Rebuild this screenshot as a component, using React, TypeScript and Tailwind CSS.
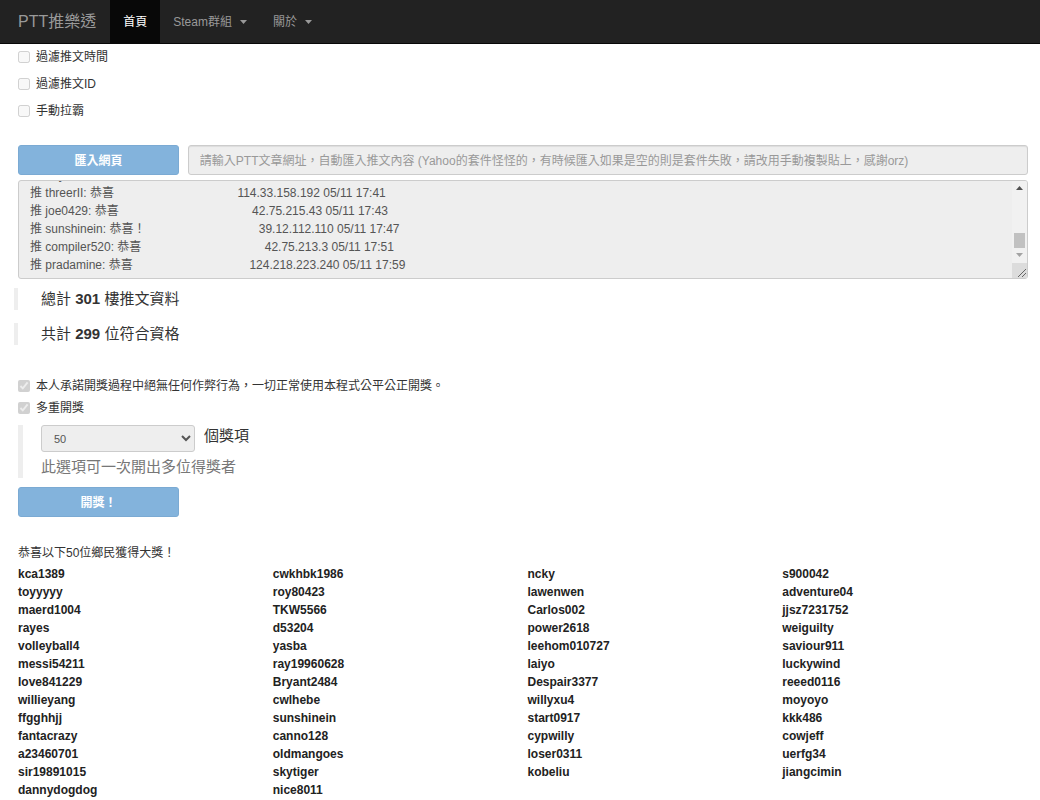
import { useLayoutEffect, useRef } from "react";
import clsx from "clsx";

const pushes = [
  { id: "any", text: "恭喜", pad: 38, meta: "42.73.18.120 05/11 17:40" },
  { id: "threerII", text: "恭喜", pad: 37, meta: "114.33.158.192 05/11 17:41" },
  { id: "joe0429", text: "恭喜", pad: 40, meta: "42.75.215.43 05/11 17:43" },
  { id: "sunshinein", text: "恭喜！", pad: 34, meta: "39.12.112.110 05/11 17:47" },
  { id: "compiler520", text: "恭喜", pad: 37, meta: "42.75.213.3 05/11 17:51" },
  { id: "pradamine", text: "恭喜", pad: 35, meta: "124.218.223.240 05/11 17:59" },
];

const pushLog = pushes
  .map((p) => `推 ${p.id}: ${p.text}${" ".repeat(p.pad)}${p.meta}`)
  .join("\n");

const winners = [
  ["kca1389", "toyyyyy", "maerd1004", "rayes", "volleyball4", "messi54211", "love841229", "willieyang", "ffgghhjj", "fantacrazy", "a23460701", "sir19891015", "dannydogdog"],
  ["cwkhbk1986", "roy80423", "TKW5566", "d53204", "yasba", "ray19960628", "Bryant2484", "cwlhebe", "sunshinein", "canno128", "oldmangoes", "skytiger", "nice8011"],
  ["ncky", "lawenwen", "Carlos002", "power2618", "leehom010727", "laiyo", "Despair3377", "willyxu4", "start0917", "cypwilly", "loser0311", "kobeliu"],
  ["s900042", "adventure04", "jjsz7231752", "weiguilty", "saviour911", "luckywind", "reeed0116", "moyoyo", "kkk486", "cowjeff", "uerfg34", "jiangcimin"],
];

const navItems = [
  { label: "首頁", active: true, menu: false },
  { label: "Steam群組", active: false, menu: true },
  { label: "關於", active: false, menu: true },
];

function Navbar() {
  return (
    <nav className="flex h-11 items-stretch border-b border-[#080808] bg-[#222] text-[#999]">
      <a href="#" className="flex items-center pl-[18px] pr-3.5 text-base">
        PTT推樂透
      </a>
      {navItems.map(({ label, active, menu }) => (
        <a
          key={label}
          href="#"
          className={clsx("flex items-center gap-2 px-[13px]", active && "bg-[#080808] text-white")}
        >
          {label}
          {menu && (
            <svg width="7" height="4" viewBox="0 0 7 4" fill="currentColor" aria-hidden="true">
              <path d="M0 0h7L3.5 4z" />
            </svg>
          )}
        </a>
      ))}
    </nav>
  );
}

function Check({ label, checked = false }: { label: string; checked?: boolean }) {
  return (
    <label className="flex items-center gap-1.5">
      <input type="checkbox" className="size-3" defaultChecked={checked} disabled />
      {label}
    </label>
  );
}

function PrimaryButton({ children }: { children: string }) {
  return (
    <button
      type="button"
      disabled
      className="h-[30px] rounded-[3px] border border-[#357ebd] bg-[#428bca] pt-px font-bold text-white opacity-65"
    >
      {children}
    </button>
  );
}

function PushLog() {
  const ref = useRef<HTMLTextAreaElement>(null);

  // keep the newest pushes in view
  useLayoutEffect(() => {
    if (ref.current) ref.current.scrollTop = ref.current.scrollHeight;
  }, []);

  return (
    <div className="flex h-[99px] overflow-hidden rounded-[3px] border border-[#ccc] bg-[#eee]">
      <textarea
        ref={ref}
        aria-label="推文內容"
        defaultValue={pushLog}
        disabled
        className="flex-1 resize-none overflow-hidden py-1 pl-[11px] leading-[18px] text-[#555]"
      />
      <div className="flex w-[15px] flex-col bg-[#f1f1f1]" aria-hidden="true">
        <svg className="w-full flex-1" viewBox="0 0 15 82">
          <path d="M4 9h7L7.5 5z" fill="#505050" />
          <path d="M2 52h11v15H2z" fill="#c1c1c1" />
          <path d="M4 72h7l-3.5 4z" fill="#a3a3a3" />
        </svg>
        <svg width="15" height="15" viewBox="0 0 15 15" className="bg-[#dcdcdc]">
          <path d="M6 14l8-8M10 14l4-4" stroke="#666" fill="none" />
        </svg>
      </div>
    </div>
  );
}

function Stat({ before, count, after }: { before: string; count: number; after: string }) {
  return (
    <blockquote className="-ml-1 border-l-4 border-[#eee] pl-[23px] text-[15px] leading-[22px]">
      {before} <strong>{count}</strong> {after}
    </blockquote>
  );
}

export default function App() {
  return (
    <div className="min-h-screen bg-white font-['Liberation_Sans','Noto_Sans_CJK_TC',sans-serif] text-xs leading-[18px] text-[#333]">
      <Navbar />
      <main className="flex flex-col pl-[18px] pr-3 pt-1">
        <div className="flex flex-col items-start gap-[9px]">
          <Check label="過濾推文時間" />
          <Check label="過濾推文ID" />
          <Check label="手動拉霸" />
        </div>

        <div className="mt-[25px] grid grid-cols-6 gap-x-[9px]">
          <PrimaryButton>匯入網頁</PrimaryButton>
          <input
            type="text"
            aria-label="PTT文章網址"
            disabled
            placeholder="請輸入PTT文章網址，自動匯入推文內容 (Yahoo的套件怪怪的，有時候匯入如果是空的則是套件失敗，請改用手動複製貼上，感謝orz)"
            className="col-span-5 h-[30px] rounded-[3px] border border-[#ccc] bg-[#eee] px-[11px] pt-px shadow-[inset_0_1px_1px_rgba(0,0,0,0.075)] placeholder:text-[#999]"
          />
        </div>
        <div className="mt-[5px]">
          <PushLog />
        </div>

        <div className="mt-[9px] flex flex-col gap-[13px]">
          <Stat before="總計" count={301} after="樓推文資料" />
          <Stat before="共計" count={299} after="位符合資格" />
        </div>

        <div className="mt-8 flex flex-col items-start gap-1">
          <Check label="本人承諾開獎過程中絕無任何作弊行為，一切正常使用本程式公平公正開獎。" checked />
          <Check label="多重開獎" checked />
        </div>

        <blockquote className="mt-2 border-l-[5px] border-[#eee] pl-[18px] text-[15px] leading-[22px]">
          <label className="flex items-start gap-[9px]">
            <select
              defaultValue="50"
              disabled
              className="h-[27px] w-[154px] rounded-[3px] border border-[#ccc] bg-[#eee] px-2 text-[11px] text-[#555] opacity-100"
            >
              <option>50</option>
            </select>
            個獎項
          </label>
          <p className="mt-1 text-[#777]">此選項可一次開出多位得獎者</p>
        </blockquote>

        <div className="mt-[9px] grid grid-cols-6 gap-x-[9px]">
          <PrimaryButton>開獎！</PrimaryButton>
        </div>

        <p className="mt-[27px]">恭喜以下50位鄉民獲得大獎！</p>
        <div className="mt-[3px] grid grid-cols-4 gap-x-[9px] font-bold text-[#222]">
          {winners.map((column) => (
            <ul key={column[0]}>
              {column.map((name) => (
                <li key={name}>{name}</li>
              ))}
            </ul>
          ))}
        </div>
      </main>
    </div>
  );
}
